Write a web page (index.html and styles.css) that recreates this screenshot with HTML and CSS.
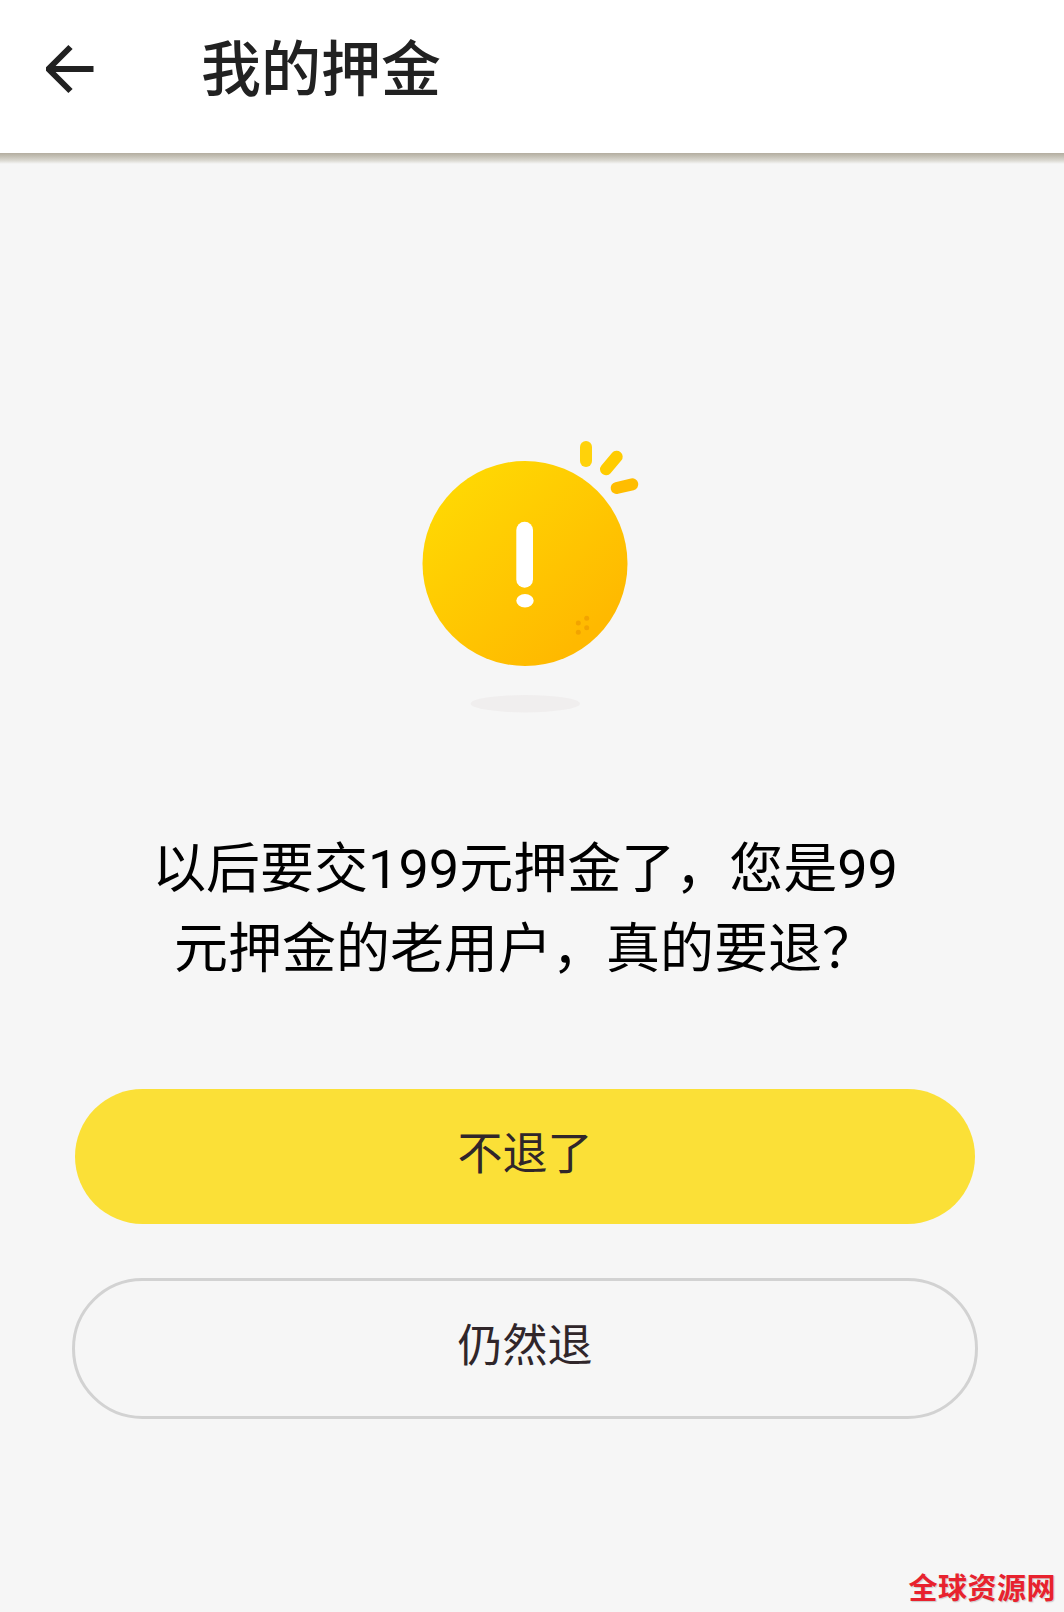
FILE: index.html
```html
<!DOCTYPE html>
<html lang="zh-CN">
<head>
<meta charset="utf-8">
<title>我的押金</title>
<link rel="stylesheet" href="styles.css">
</head>
<body>
<div class="page">
  <header class="topbar">
    <svg class="back" width="50" height="50" viewBox="0 0 50 50" aria-hidden="true">
      <path d="M47.5 25H2.5" class="back-line"/>
      <path d="M24.5 3L2.5 25L24.5 47" class="back-line"/>
    </svg>
    <h1 class="title">我的押金</h1>
  </header>
  <main class="content">
    <svg class="alert" width="240" height="275" viewBox="0 0 240 275" aria-hidden="true">
      <defs>
        <linearGradient id="ball" x1="0.15" y1="0.1" x2="0.8" y2="0.85">
          <stop offset="0" stop-color="#ffd803"/>
          <stop offset="1" stop-color="#ffb900"/>
        </linearGradient>
      </defs>
      <circle cx="120" cy="123.500" r="102.500" fill="url(#ball)"/>
      <line x1="181" y1="7" x2="181" y2="21" class="ray ray-a"/>
      <line x1="211.700" y1="16.700" x2="201" y2="29.300" class="ray ray-b"/>
      <line x1="227.300" y1="44.300" x2="211.700" y2="48" class="ray ray-c"/>
      <rect x="111.300" y="81.700" width="16.700" height="66" rx="8.300" fill="#fff"/>
      <ellipse cx="120" cy="160.700" rx="8.700" ry="6.700" fill="#fff"/>
      <g fill="#f2a400">
        <circle cx="181.700" cy="178.300" r="2.500"/>
        <circle cx="173.300" cy="183" r="2.500"/>
        <circle cx="181.700" cy="187.700" r="2.500"/>
        <circle cx="173.300" cy="192.300" r="2.500"/>
      </g>
      <ellipse cx="120.300" cy="263.700" rx="54.700" ry="8.700" fill="#f0eeee"/>
    </svg>
    <p class="message">以后要交199元押金了，您是99<br>元押金的老用户，真的要退？</p>
    <div class="actions">
      <button class="btn btn-primary" type="button">不退了</button>
      <button class="btn btn-outline" type="button">仍然退</button>
    </div>
  </main>
  <div class="watermark">全球资源网</div>
</div>
</body>
</html>
```
FILE: styles.css
```css
* {
  box-sizing: border-box;
}

html,
body {
  margin: 0;
  padding: 0;
}

body {
  background: #f6f6f6;
  font-family: "Noto Sans CJK SC", "Noto Sans", sans-serif;
}

.page {
  position: relative;
  width: 1064px;
  height: 1612px;
  overflow: hidden;
}

.topbar {
  display: flex;
  align-items: center;
  position: relative;
  height: 153px;
  padding: 0 0 15px 46px;
  background: #fff;
}

.topbar::after {
  content: "";
  position: absolute;
  left: 0;
  right: 0;
  top: 100%;
  height: 11px;
  background: linear-gradient(#b4ada0 0, #c3bfb4 30%, #dcdad3 70%, #f6f6f6 100%);
}

.back {
  flex: none;
}

.back-line {
  fill: none;
  stroke: #212121;
  stroke-width: 6px;
  stroke-linecap: butt;
}

.title {
  margin: 0 0 8px 105px;
  font-size: 60px;
  line-height: 80px;
  font-weight: 500;
  color: #212121;
}

.content {
  display: flex;
  flex-direction: column;
  align-items: center;
  width: 1050px;
  padding-top: 287px;
}

.alert {
  display: block;
}

.message {
  margin: 115px 0 0;
  width: 800px;
  text-align: center;
  font-family: Roboto, "Noto Sans CJK SC", sans-serif;
  font-size: 54px;
  line-height: 80px;
  color: #000;
}

.actions {
  display: flex;
  flex-direction: column;
  align-items: center;
  gap: 54px;
  margin-top: 99px;
}

.btn {
  display: block;
  font-family: inherit;
  font-size: 45px;
  color: #30262a;
  border-radius: 71px;
}

.btn-primary {
  width: 900px;
  height: 135px;
  padding: 0 0 13px;
  background: #fbe037;
  border: 0;
}

.btn-outline {
  width: 906px;
  height: 141px;
  padding: 0 0 12px;
  background: transparent;
  border: 3px solid #d2d2d2;
}

.ray {
  stroke-width: 12px;
  stroke-linecap: round;
}

.ray-a {
  stroke: #ffd20a;
}

.ray-b {
  stroke: #ffcc00;
}

.ray-c {
  stroke: #ffbd00;
}

.watermark {
  position: absolute;
  right: 8px;
  bottom: 8px;
  font-size: 29px;
  line-height: 36px;
  font-weight: 700;
  color: #e8222e;
  letter-spacing: 0.5px;
  text-shadow: 1px 1px 1px rgba(120, 120, 120, 0.35);
}
```
